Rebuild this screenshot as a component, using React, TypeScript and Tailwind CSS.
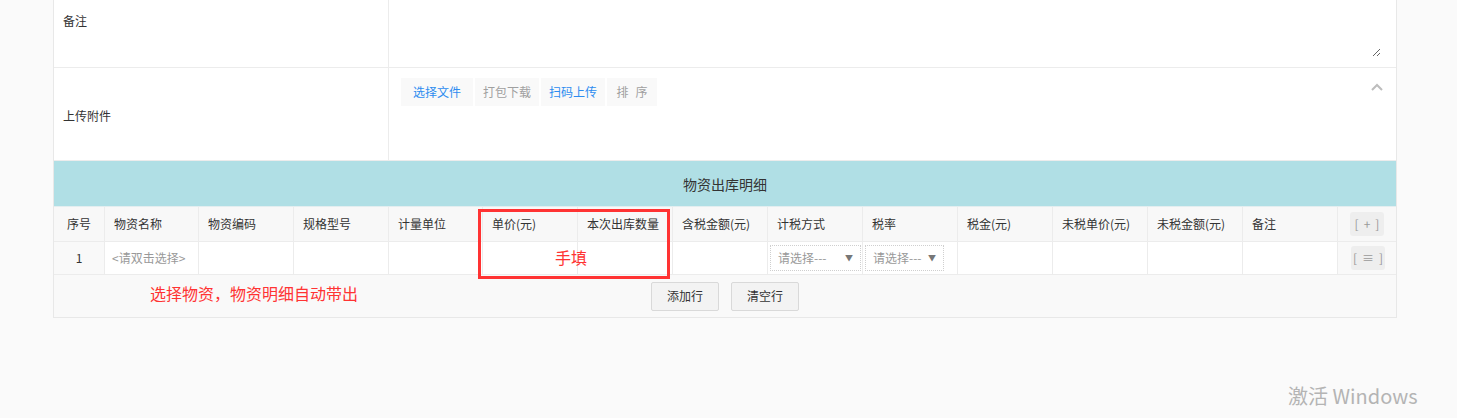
import React from 'react'

const FONT = { fontFamily: '"Noto Sans CJK SC", "Noto Sans", sans-serif' }

const HEADERS = [
  '物资名称',
  '物资编码',
  '规格型号',
  '计量单位',
  '单价(元)',
  '本次出库数量',
  '含税金额(元)',
  '计税方式',
  '税率',
  '税金(元)',
  '未税单价(元)',
  '未税金额(元)',
  '备注',
]

const GRID =
  'grid grid-cols-[51px_94px_95px_95px_94px_95px_95px_95px_95px_95px_95px_95px_95px_95px_58px]'

function FakeSelect({ width }: { width: string }) {
  return (
    <div
      className={`${width} ml-[2px] h-[26px] border border-dotted border-[#cfcfcf] bg-white flex items-center justify-between pl-[7px] pr-[7px]`}
    >
      <span className="text-[12px] leading-4 text-[#999]">请选择---</span>
      <span className="text-[8px] leading-none text-[#777]">▼</span>
    </div>
  )
}

function BracketButton({ glyph }: { glyph: string }) {
  return (
    <button className="w-[34px] h-[24px] rounded-[3px] bg-[#eeeeee] text-[#999] text-[12px] leading-4 flex items-center justify-center gap-[5px]">
      <span>[</span>
      <span>{glyph}</span>
      <span>]</span>
    </button>
  )
}

export default function App() {
  return (
    <div className="relative w-[1457px] h-[418px] overflow-hidden bg-[#fafafa] text-[#333]" style={FONT}>
      <div className="ml-[53px] w-[1344px] border-x border-b border-[#e8e8e8] bg-white">
        {/* 备注 */}
        <div className="flex h-[68px] border-b border-[#ececec]">
          <div className="w-[335px] border-r border-[#ececec] pl-[9px] pt-[13px] text-[12px] leading-4">备注</div>
          <div className="flex-1 pl-[12px] pr-[15px] pb-[10px]">
            <textarea className="block w-full h-full resize-y border-0 outline-none bg-white" />
          </div>
        </div>

        {/* 上传附件 */}
        <div className="flex h-[93px] border-b border-[#ececec]">
          <div className="w-[335px] border-r border-[#ececec] pl-[9px] pt-[3px] flex items-center text-[12px] leading-4">
            上传附件
          </div>
          <div className="flex-1 flex items-start justify-between pl-[12px] pr-[13px]">
            <div className="mt-[10px] flex gap-[2px] text-[12px] leading-4">
              <button className="w-[72px] h-[28px] bg-[#f9f9f9] text-[#2d8cf0]">选择文件</button>
              <button className="w-[64px] h-[28px] bg-[#f9f9f9] text-[#a0a0a0]">打包下载</button>
              <button className="w-[64px] h-[28px] bg-[#f9f9f9] text-[#2d8cf0]">扫码上传</button>
              <button className="w-[50px] h-[28px] bg-[#f9f9f9] text-[#a0a0a0] flex items-center justify-center gap-[7px]">
                <span>排</span>
                <span>序</span>
              </button>
            </div>
            <svg className="mt-[15px]" width="12" height="8" viewBox="0 0 12 8" fill="none">
              <path d="M1 7 L6 2 L11 7" stroke="#bdbdbd" strokeWidth="2" />
            </svg>
          </div>
        </div>

        {/* 物资出库明细 */}
        <div className="relative">
          <div className="h-[46px] bg-[#b0dfe5] border-b border-[#e3eef0] flex items-center justify-center text-[14px] leading-5">
            物资出库明细
          </div>

          {/* header */}
          <div className={`${GRID} h-[35px] bg-[#f8f8f8] border-b border-[#ececec] text-[12px] leading-4`}>
            <div className="border-r border-[#ececec] flex items-center justify-center">序号</div>
            {HEADERS.map((h) => (
              <div key={h} className="border-r border-[#ececec] flex items-center pl-[9px] whitespace-nowrap">
                {h}
              </div>
            ))}
            <div className="flex items-center justify-center">
              <BracketButton glyph="+" />
            </div>
          </div>

          {/* data row */}
          <div className={`${GRID} h-[33px] border-b border-[#ececec] text-[12px] leading-4`}>
            <div className="border-r border-[#ececec] bg-[#f9f9f9] flex items-center justify-center">1</div>
            <div className="border-r border-[#ececec] flex items-center pl-[7px] text-[#999]">&lt;请双击选择&gt;</div>
            <div className="border-r border-[#ececec]" />
            <div className="border-r border-[#ececec]" />
            <div className="border-r border-[#ececec]" />
            <div className="border-r border-[#ececec]" />
            <div className="border-r border-[#ececec]" />
            <div className="border-r border-[#ececec]" />
            <div className="border-r border-[#ececec] flex items-center">
              <FakeSelect width="w-[91px]" />
            </div>
            <div className="border-r border-[#ececec] flex items-center">
              <FakeSelect width="w-[79px]" />
            </div>
            <div className="border-r border-[#ececec]" />
            <div className="border-r border-[#ececec]" />
            <div className="border-r border-[#ececec]" />
            <div className="border-r border-[#ececec]" />
            <div className="bg-[#f9f9f9] flex items-center justify-center pl-[2px]">
              <BracketButton glyph="≡" />
            </div>
          </div>

          {/* footer */}
          <div className="relative h-[42px] bg-[#f9f9f9] flex items-center justify-center gap-[12px] text-[12px] leading-4">
            <button className="w-[68px] h-[29px] rounded-[2px] border border-[#d9d9d9] bg-[#f3f3f3] text-[#333]">添加行</button>
            <button className="w-[68px] h-[29px] rounded-[2px] border border-[#d9d9d9] bg-[#f3f3f3] text-[#333]">清空行</button>
            <span className="absolute left-[96px] top-[8px] text-[16px] leading-5 text-[#ff3333]">
              选择物资，物资明细自动带出
            </span>
          </div>

          {/* 手填 annotation */}
          <div className="absolute left-[424px] top-[48px] w-[192px] h-[70px] border-[3px] border-[#ff3333]">
            <span className="absolute left-[74px] top-[35px] text-[16px] leading-5 text-[#ff3333]">手填</span>
          </div>
        </div>
      </div>

      {/* Windows activation watermark */}
      <div className="absolute left-[1288px] top-[382px] text-[#b4b4b4] pointer-events-none" style={{ fontFamily: '"Noto Sans CJK SC", "Open Sans", sans-serif' }}>
        <div className="text-[20px] leading-7">激活 Windows</div>
        <div className="text-[14px] leading-5 -ml-[1px] mt-[4px]">转到"设置"以激活 Windows。</div>
      </div>
    </div>
  )
}
